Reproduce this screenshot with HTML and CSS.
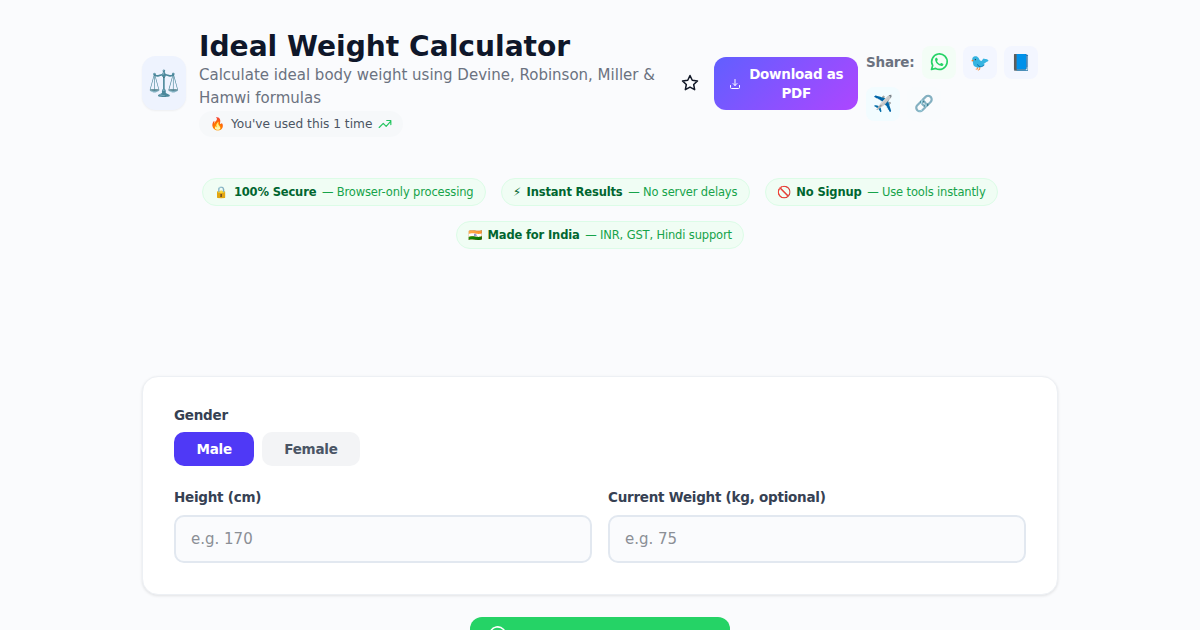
FILE: index.html
```html
<!DOCTYPE html>
<html lang="en">
<head>
  <meta charset="UTF-8" />
  <meta name="viewport" content="width=device-width, initial-scale=1.0"/>
  <title>Ideal Weight Calculator</title>
  <link rel="stylesheet" href="styles.css">
</head>
<body>
  <main class="container">
    <header class="tool-header">
      <div class="tool-icon">⚖️</div>
      <div class="tool-info">
        <h1>Ideal Weight Calculator</h1>
        <p>Calculate ideal body weight using Devine, Robinson, Miller &amp; Hamwi formulas</p>
        <div class="usage">
          <span>🔥</span>
          <span>You've used this 1 time</span>
          <svg class="trend" viewBox="0 0 24 24"><path d="M2 18l7-7 5 5 8-9M15 6h7v7"/></svg>
        </div>
      </div>
      <button class="star-btn" aria-label="Favorite">
        <svg viewBox="0 0 24 24"><path d="M12 2l3 6.300 7 .9-5.100 4.800 1.300 6.900-6.200-3.400-6.200 3.400 1.300-6.900L2 9.200l7-.9z"/></svg>
      </button>
      <button class="download-btn">
        <svg viewBox="0 0 24 24"><path d="M3 15v4a2 2 0 0 0 2 2h14a2 2 0 0 0 2-2v-4M12 3v12M8 11l4 4 4-4"/></svg>
        <span>Download as PDF</span>
      </button>
      <div class="share">
        <span class="share-label">Share:</span>
        <a class="share-link whatsapp">
          <svg viewBox="0 0 24 24"><path class="ring" d="M3 21l1.4-4.9A9.3 9.3 0 1 1 8 19.700z"/><path class="phone" d="M8.700 6.800c-.9.300-1.500 1.200-1.400 2.300.4 4 3.600 7.200 7.600 7.600 1.100.1 2-.5 2.300-1.500.2-.6 0-.9-.4-1.100l-1.800-.9c-.4-.2-.7-.1-.9.200l-.8.900c-2-.8-3-1.900-3.700-3.600l.8-.9c.2-.3.200-.5.100-.8l-.8-1.800c-.2-.4-.5-.5-1-.4z"/></svg>
        </a>
        <a class="share-link twitter">🐦</a>
        <a class="share-link facebook">📘</a>
        <a class="share-link telegram">✈️</a>
        <a class="share-link copy">🔗</a>
      </div>
    </header>

    <div class="badges">
      <div class="badge"><span>🔒</span><strong>100% Secure</strong><span class="note">— Browser-only processing</span></div>
      <div class="badge"><span>⚡</span><strong>Instant Results</strong><span class="note">— No server delays</span></div>
      <div class="badge"><span>🚫</span><strong>No Signup</strong><span class="note">— Use tools instantly</span></div>
      <div class="badge"><span>🇮🇳</span><strong>Made for India</strong><span class="note">— INR, GST, Hindi support</span></div>
    </div>

    <section class="card">
      <label>Gender</label>
      <div class="toggle-group">
        <button class="toggle selected">Male</button>
        <button class="toggle">Female</button>
      </div>
      <div class="fields">
        <div class="field">
          <label for="height">Height (cm)</label>
          <input type="number" id="height" placeholder="e.g. 170" />
        </div>
        <div class="field">
          <label for="weight">Current Weight (kg, optional)</label>
          <input type="number" id="weight" placeholder="e.g. 75" />
        </div>
      </div>
    </section>

    <button class="whatsapp-btn">
      <svg viewBox="0 0 24 24"><path class="ring" d="M2 22l1.500-5.400A10.300 10.300 0 1 1 7.500 20.500z"/></svg>
      <span>Share Result on WhatsApp</span>
    </button>
  </main>
</body>
</html>
```
FILE: styles.css
```css
* {
  box-sizing: border-box;
}

html {
  font-size: 15px;
}

body {
  margin: 0;
  height: 630px;
  overflow: hidden;
  background: #fafbfd;
  color: #0f172a;
  font-family: "DejaVu Sans", sans-serif;
}

button,
input {
  font-family: inherit;
}

svg {
  fill: none;
  stroke: currentColor;
  stroke-width: 2;
  stroke-linecap: round;
  stroke-linejoin: round;
}

.container {
  width: 916px;
  margin: 0 auto;
  padding-top: 29px;
}

.tool-header {
  display: flex;
  align-items: center;
  height: 108px;
}

.tool-icon {
  width: 44px;
  height: 54px;
  margin-right: 13px;
  padding-right: 1px;
  display: flex;
  align-items: center;
  justify-content: center;
  border-radius: 14px;
  background: #eef3fe;
  font-size: 25.500px;
  box-shadow: 0 1px 2px rgba(0, 0, 0, 0.05);
}

.tool-info {
  width: 476px;
}

h1 {
  margin: 0;
  padding-top: 1px;
  font-size: 1.875rem;
  line-height: 34px;
  font-weight: 700;
  white-space: nowrap;
}

.tool-info p {
  margin: 0;
  color: #6b7280;
  font-size: 1rem;
  line-height: 1.5;
}

.usage {
  display: inline-flex;
  align-items: center;
  gap: 6px;
  height: 26px;
  margin-top: 2px;
  padding: 0 11px;
  border-radius: 13px;
  background: #f6f8fa;
  color: #4b5563;
  font-size: 12.200px;
}

.trend {
  width: 14px;
  height: 14px;
  color: #22c55e;
}

.star-btn {
  width: 30px;
  padding: 0;
  border: none;
  background: none;
  color: #111827;
}

.star-btn svg {
  display: block;
  width: 18px;
  height: 18px;
  margin: 0 auto;
}

.download-btn {
  display: flex;
  align-items: center;
  gap: 7.500px;
  width: 144px;
  height: 53px;
  margin-left: 9px;
  padding: 1px 14px 0 15px;
  border: none;
  border-radius: 12px;
  background: linear-gradient(135deg, #615fff, #ad46ff);
  color: #fff;
  font-size: 13.500px;
  letter-spacing: -0.26px;
  font-weight: 700;
  line-height: 18.750px;
}

.download-btn svg {
  flex: none;
  width: 12px;
  height: 12px;
}

.share {
  display: flex;
  flex-wrap: wrap;
  align-items: center;
  gap: 7.500px;
  width: 192px;
  margin-left: 8px;
}

.share-label {
  color: #6b7280;
  font-size: 13.500px;
  letter-spacing: -0.2px;
  font-weight: 700;
}

.share-link {
  display: flex;
  align-items: center;
  justify-content: center;
  width: 33.750px;
  height: 33.750px;
  border-radius: 8px;
  background: #f9fbfd;
  font-size: 16px;
}

.share-link svg {
  width: 20px;
  height: 20px;
}

.whatsapp {
  background: #f3fdf6;
  color: #25d366;
}

.phone {
  fill: currentColor;
  stroke: none;
}

.twitter,
.facebook {
  background: #f3f6ff;
}

.telegram {
  background: #f2fcff;
}

.badges {
  display: flex;
  flex-wrap: wrap;
  justify-content: center;
  gap: 15px;
  margin-top: 41px;
}

.badge {
  display: flex;
  align-items: center;
  gap: 5.600px;
  height: 28px;
  padding: 0 11.250px;
  border: 1px solid #dcfce7;
  border-radius: 14px;
  background: #f0fdf4;
  color: #016630;
  font-size: 11.500px;
  letter-spacing: -0.150px;
}

.note {
  color: #16a34a;
}

.card {
  height: 219px;
  margin-top: 127px;
  padding: 29px 31px;
  border: 1px solid #edf0f4;
  border-radius: 16px;
  background: #fff;
  box-shadow: 0 1px 3px rgba(0, 0, 0, 0.1);
}

label {
  display: block;
  color: #364153;
  font-size: 13.500px;
  letter-spacing: -0.25px;
  font-weight: 700;
  line-height: 18px;
}

.toggle-group {
  display: flex;
  gap: 7.500px;
  margin: 8px 0 22px;
}

.toggle {
  height: 34px;
  padding: 0 22.500px;
  border: none;
  border-radius: 10px;
  background: #f3f4f6;
  color: #4a5565;
  font-size: 13.500px;
  letter-spacing: -0.26px;
  font-weight: 700;
}

.toggle.selected {
  background: #4f39f6;
  color: #fff;
}

.fields {
  display: flex;
  gap: 16px;
}

.field {
  flex: 1;
}

.field input {
  width: 100%;
  height: 48px;
  margin-top: 9px;
  padding: 0 15px;
  border: 2px solid #e2e8f0;
  border-radius: 10px;
  background: #fafbfd;
  font-size: 1rem;
}

.field input::placeholder {
  color: #8b8f96;
}

.whatsapp-btn {
  display: flex;
  align-items: center;
  justify-content: center;
  gap: 7.500px;
  width: 260px;
  height: 37px;
  margin: 22px auto 0;
  padding: 0;
  border: none;
  border-radius: 12px;
  background: #25d366;
  color: #fff;
  font-size: 13.500px;
  letter-spacing: -0.26px;
  font-weight: 700;
}

.whatsapp-btn svg {
  width: 18.750px;
  height: 18.750px;
}
```
